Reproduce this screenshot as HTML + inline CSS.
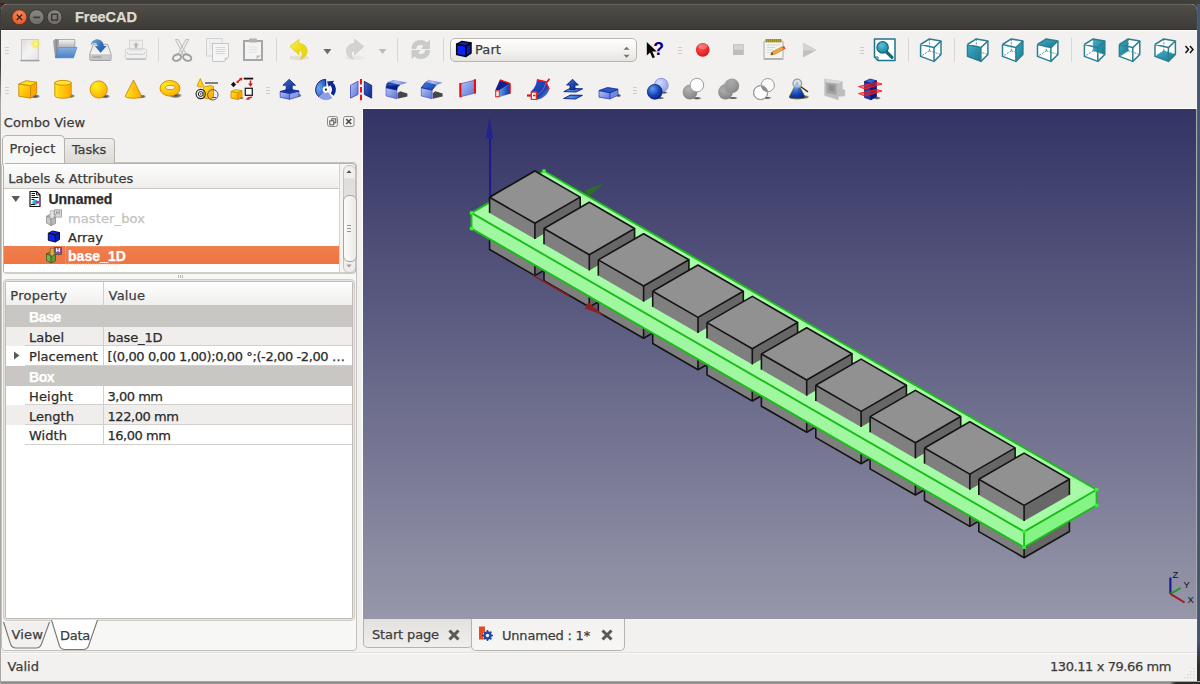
<!DOCTYPE html><html><head><meta charset="utf-8"><title>FreeCAD</title><style>
html,body{margin:0;padding:0;}
body{width:1200px;height:684px;overflow:hidden;background:#403f3a;position:relative;
 font-family:"DejaVu Sans","Liberation Sans",sans-serif;font-size:13px;color:#3c3c3c;}
.abs{position:absolute;}
.t{position:absolute;white-space:nowrap;line-height:1;-webkit-text-stroke:0.25px currentColor;}
#win{position:absolute;left:1px;top:4px;width:1196px;height:677px;background:#f2f1f0;overflow:hidden;border-radius:6px 6px 0 0;}
#title{position:absolute;left:0;top:0;width:1196px;height:26px;background:linear-gradient(#65645d,#65645d 1px,#4e4d47 1px,#45443f 50%,#3d3c38 25px,#33322e 25px);border-radius:5px 5px 0 0;}
#tl{position:absolute;left:0;top:26px;width:1196px;height:1px;background:#fbfbfa;}
</style></head><body>
<div class="abs" style="left:0;top:0;width:1200px;height:4px;background:#403f3a"></div><svg class="abs" style="left:0;top:3px" width="6" height="6" viewBox="0 0 6 6"><path d="M0 0h5.500L1 4.800H0z" fill="#7d0606"/></svg>
<div class="abs" style="left:1197px;top:4px;width:1px;height:680px;background:#5e5d5d"></div>
<div class="abs" style="left:1198px;top:4px;width:2px;height:680px;background:linear-gradient(90deg,#3f506b,#425c80)"></div>
<div class="abs" style="left:1197px;top:640px;width:3px;height:44px;background:linear-gradient(rgba(45,44,42,0),#2d2c2a 60%)"></div>
<div class="abs" style="left:0;top:681px;width:1200px;height:3px;background:linear-gradient(#aaa6a2,#aaa6a2 1px,#8b8989 1px,#8b8989 2px,#9b9997 2px)"></div>
<div class="abs" style="left:1170px;top:682px;width:30px;height:2px;background:linear-gradient(90deg,#8b8989,#2c2b29 20%)"></div>
<div class="abs" style="left:0;top:4px;width:1px;height:680px;background:linear-gradient(#3e3d39,#3e3d39 62px,#aaa6a1 98px,#aaa6a1)"></div>
<div id="win">
<div id="title"></div><div id="tl"></div>
</div>
<svg class="abs" style="left:0;top:4px" width="200" height="26" viewBox="0 0 200 26"><defs><radialGradient id="cb" cx="0.5" cy="0.3" r="0.8"><stop offset="0" stop-color="#f58a5e"/><stop offset="1" stop-color="#e2501c"/></radialGradient><linearGradient id="gb" x1="0" y1="0" x2="0" y2="1"><stop offset="0" stop-color="#8a8983"/><stop offset="1" stop-color="#6b6a65"/></linearGradient></defs><circle cx="19.4" cy="13.2" r="7.5" fill="url(#cb)" stroke="#5a2a18" stroke-width="0.8"/><path d="M16.7 10.5l5.400 5.400M22.100 10.500l-5.400 5.400" stroke="#4a2013" stroke-width="1.400"/><circle cx="36.600" cy="13.200" r="7.500" fill="url(#gb)" stroke="#2e2d2a" stroke-width="0.800"/><path d="M33.200 13.400h6.800" stroke="#3a3935" stroke-width="1.600"/><circle cx="54.600" cy="13.200" r="7.500" fill="url(#gb)" stroke="#2e2d2a" stroke-width="0.800"/><rect x="51.700" y="10.300" width="5.800" height="5.800" fill="none" stroke="#3a3935" stroke-width="1.400"/></svg>
<div class="abs" style="left:5px;top:47px;width:4px;height:1px;background:#cfccc7"></div><div class="abs" style="left:5px;top:50px;width:4px;height:1px;background:#cfccc7"></div><div class="abs" style="left:5px;top:53px;width:4px;height:1px;background:#cfccc7"></div>
<div class="abs" style="left:5px;top:87px;width:4px;height:1px;background:#cfccc7"></div><div class="abs" style="left:5px;top:90px;width:4px;height:1px;background:#cfccc7"></div><div class="abs" style="left:5px;top:93px;width:4px;height:1px;background:#cfccc7"></div>
<div class="abs" style="left:678px;top:47px;width:4px;height:1px;background:#cfccc7"></div><div class="abs" style="left:678px;top:50px;width:4px;height:1px;background:#cfccc7"></div><div class="abs" style="left:678px;top:53px;width:4px;height:1px;background:#cfccc7"></div>
<div class="abs" style="left:860px;top:47px;width:4px;height:1px;background:#cfccc7"></div><div class="abs" style="left:860px;top:50px;width:4px;height:1px;background:#cfccc7"></div><div class="abs" style="left:860px;top:53px;width:4px;height:1px;background:#cfccc7"></div>
<div class="abs" style="left:266px;top:87px;width:4px;height:1px;background:#cfccc7"></div><div class="abs" style="left:266px;top:90px;width:4px;height:1px;background:#cfccc7"></div><div class="abs" style="left:266px;top:93px;width:4px;height:1px;background:#cfccc7"></div>
<div class="abs" style="left:633px;top:87px;width:4px;height:1px;background:#cfccc7"></div><div class="abs" style="left:633px;top:90px;width:4px;height:1px;background:#cfccc7"></div><div class="abs" style="left:633px;top:93px;width:4px;height:1px;background:#cfccc7"></div>
<div class="abs" style="left:158px;top:38px;width:1px;height:24px;background:#dad7d2"></div>
<div class="abs" style="left:275.5px;top:38px;width:1px;height:24px;background:#dad7d2"></div>
<div class="abs" style="left:397px;top:38px;width:1px;height:24px;background:#dad7d2"></div>
<div class="abs" style="left:443px;top:38px;width:1px;height:24px;background:#dad7d2"></div>
<div class="abs" style="left:908px;top:38px;width:1px;height:24px;background:#dad7d2"></div>
<div class="abs" style="left:954px;top:38px;width:1px;height:24px;background:#dad7d2"></div>
<div class="abs" style="left:1071px;top:38px;width:1px;height:24px;background:#dad7d2"></div>
<div class="abs" style="left:450px;top:38px;width:184.5px;height:21.5px;border:1px solid #bab6b0;border-radius:5px;background:linear-gradient(#fefefe,#f3f2f0 55%,#e6e4e0)"></div>
<svg class="abs" style="left:620px;top:40px" width="12" height="20" viewBox="620 40 12 20"><path d="M623.500 49.700L626.600 46.700 629.700 49.700zM623.500 54.700L626.600 57.700 629.700 54.700z" fill="#77756f"/></svg>
<svg class="abs" style="left:1184px;top:44px" width="12" height="12" viewBox="0 0 12 12"><path d="M1.5 2l3 3.5-3 3.5M6 2l3 3.5-3 3.5" fill="none" stroke="#111" stroke-width="1.5"/></svg>
<svg class="abs" style="left:325px;top:114px" width="32" height="16" viewBox="0 0 32 16"><rect x="2.5" y="2.5" width="10" height="10" rx="2" fill="#f4f3f2" stroke="#8b8985"/><rect x="6.8" y="4.8" width="4" height="4" fill="none" stroke="#55534f" stroke-width="1"/><rect x="4.8" y="6.8" width="4" height="4" fill="#f4f3f2" stroke="#55534f" stroke-width="1"/><rect x="18.5" y="2.5" width="10.5" height="10" rx="2" fill="#f4f3f2" stroke="#8b8985"/><path d="M21.2 5l5 5M26.2 5l-5 5" stroke="#4a4945" stroke-width="1.7"/></svg>
<div class="abs" style="left:1px;top:162px;width:354px;height:487px;border:1px solid #c4c1bc;border-radius:4px;background:#f7f7f6"></div>
<div class="abs" style="left:63px;top:138px;width:50px;height:24px;border:1px solid #b6b3ad;border-bottom:none;border-radius:4px 4px 0 0;background:linear-gradient(#eeedeb,#dddad6)"></div>
<div class="abs" style="left:1.5px;top:135px;width:61.5px;height:29px;border:1px solid #b6b3ad;border-bottom:none;border-radius:5px 5px 0 0;background:linear-gradient(#f6f5f4,#f7f7f6)"></div>
<div class="abs" style="left:3px;top:163px;width:351px;height:108px;border:1px solid #b6b3ad;border-bottom:2px solid #cfccc8;border-radius:4px;background:#f4f3f2"></div>
<div class="abs" style="left:4px;top:164px;width:335px;height:108px;background:#fff;border-right:1px solid #d5d2cd"></div>
<div class="abs" style="left:4px;top:164px;width:335px;height:24px;background:linear-gradient(#fdfdfd,#efeeec);border-bottom:1px solid #c9c6c1"></div>
<div class="abs" style="left:4px;top:246px;width:335px;height:18px;background:linear-gradient(#f07f4e,#ee7440)"></div>
<div class="abs" style="left:342.5px;top:164.5px;width:11px;height:106px;background:linear-gradient(#efeeec,#efeeec 12px,#dfddd9 13px,#e3e1de 30px,#efeeec 31px);border-radius:6px;border:1px solid #c6c3bd"></div>
<div class="abs" style="left:342.5px;top:194.5px;width:12px;height:65px;background:linear-gradient(90deg,#fbfbfa,#eceae7);border-radius:6px;border:1px solid #a9a59e"></div>
<svg class="abs" style="left:342px;top:166px" width="14" height="106" viewBox="0 0 14 106"><path d="M4.5 7L7 4.2 9.5 7z" fill="#4b4a46"/><path d="M4.2 98.5L7 101.5 9.8 98.5z" fill="#a5a29c"/><path d="M5 59.5h4M5 62.5h4M5 65.5h4" stroke="#9a968f" stroke-width="1"/></svg>
<div class="abs" style="left:178px;top:275px;width:1px;height:3px;background:#bdbab4"></div>
<div class="abs" style="left:180px;top:275px;width:1px;height:3px;background:#bdbab4"></div>
<div class="abs" style="left:182px;top:275px;width:1px;height:3px;background:#bdbab4"></div>
<div class="abs" style="left:3px;top:279px;width:350px;height:340px;border:1px solid #cfccc8;border-radius:4px;background:#e6e4e1"></div>
<div class="abs" style="left:5px;top:281px;width:346px;height:336px;border:1px solid #bfbcb7;border-radius:2px;background:#fff"></div>
<div class="abs" style="left:6px;top:282px;width:346px;height:23px;background:linear-gradient(#fefefe,#f0efed);border-bottom:1px solid #c9c6c1"></div>
<div class="abs" style="left:6px;top:306px;width:346px;height:21px;background:#c9c7c4"></div>
<div class="abs" style="left:6px;top:327px;width:346px;height:19px;background:#efeeed"></div>
<div class="abs" style="left:25px;top:345px;width:327px;height:1px;background:#d2d0cc"></div>
<div class="abs" style="left:25px;top:365px;width:327px;height:1px;background:#d2d0cc"></div>
<div class="abs" style="left:6px;top:366px;width:346px;height:19.5px;background:#c9c7c4"></div>
<div class="abs" style="left:25px;top:404px;width:327px;height:1px;background:#d2d0cc"></div>
<div class="abs" style="left:6px;top:405px;width:346px;height:19.5px;background:#efeeed"></div>
<div class="abs" style="left:25px;top:423.5px;width:327px;height:1px;background:#d2d0cc"></div>
<div class="abs" style="left:25px;top:444px;width:327px;height:1px;background:#d2d0cc"></div>
<div class="abs" style="left:103px;top:282px;width:1px;height:24px;background:#d2d0cc"></div>
<div class="abs" style="left:103px;top:327px;width:1px;height:39px;background:#d2d0cc"></div>
<div class="abs" style="left:103px;top:385.5px;width:1px;height:58.5px;background:#d2d0cc"></div>
<svg class="abs" style="left:12px;top:350px" width="10" height="12" viewBox="0 0 10 12"><path d="M2 1.5L7.5 5.5 2 9.5z" fill="#5a5955"/></svg>
<svg class="abs" style="left:10px;top:193px" width="12" height="12" viewBox="0 0 12 12"><path d="M1.5 3h8.5L5.8 9z" fill="#5a5955"/></svg>
<svg class="abs" style="left:0;top:618px" width="120" height="36" viewBox="0 0 120 36"><path d="M3.500 4 L10.500 26 Q12 30 16 30 L36 30 Q40 30 41.500 26 L49.500 4" fill="#f1f0ee" stroke="#7b7873" stroke-width="1.100"/><path d="M51.500 2 L59.500 28 Q61 31.500 65 31.500 L83 31.500 Q87 31.500 88.500 28 L97.500 2" fill="#ffffff" stroke="#7b7873" stroke-width="1.100"/></svg>
<div class="abs" style="left:363px;top:619px;width:108px;height:28px;border:1px solid #b6b3ad;border-top:none;border-radius:0 0 5px 5px;background:linear-gradient(#e3e1dd,#f0efed)"></div>
<div class="abs" style="left:471px;top:619px;width:152px;height:31px;border:1px solid #b6b3ad;border-top:none;border-radius:0 0 5px 5px;background:linear-gradient(#f3f2f1,#f6f6f5)"></div>
<svg class="abs" style="left:447px;top:628px" width="14" height="14" viewBox="0 0 14 14"><path d="M2.5 2.5l9 9M11.5 2.5l-9 9" stroke="#5b5955" stroke-width="3.1"/></svg>
<svg class="abs" style="left:600px;top:628px" width="14" height="14" viewBox="0 0 14 14"><path d="M2.5 2.5l9 9M11.5 2.5l-9 9" stroke="#5b5955" stroke-width="3.1"/></svg>
<div class="abs" style="left:362px;top:108px;width:835px;height:1px;background:#fff"></div>
<div class="abs" style="left:362px;top:108px;width:1px;height:511px;background:#fff"></div>
<div class="abs" style="left:1196px;top:109px;width:1px;height:510px;background:#a9a7a5"></div>
<div class="abs" style="left:1px;top:652px;width:1196px;height:1px;background:#e1dfdb"></div>
<div class="abs" style="left:1px;top:653px;width:1196px;height:1px;background:#fafaf9"></div>
<svg class="abs" style="left:1180px;top:664px" width="16" height="16" viewBox="0 0 16 16" fill="#dbd9d5"><rect x="13" y="4" width="1.500" height="1.500"/><rect x="10" y="7" width="1.500" height="1.500"/><rect x="13" y="7" width="1.500" height="1.500"/><rect x="7" y="10" width="1.500" height="1.500"/><rect x="10" y="10" width="1.500" height="1.500"/><rect x="13" y="10" width="1.500" height="1.500"/><rect x="4" y="13" width="1.500" height="1.500"/><rect x="7" y="13" width="1.500" height="1.500"/><rect x="10" y="13" width="1.500" height="1.500"/><rect x="13" y="13" width="1.500" height="1.500"/></svg>
<svg class="abs" style="left:363px;top:109px" width="833" height="510" viewBox="0 0 833 510"><defs><linearGradient id="bg" x1="0" y1="0" x2="0" y2="1"><stop offset="0" stop-color="#333365"/><stop offset="1" stop-color="#9797aa"/></linearGradient></defs><rect width="833" height="510" fill="url(#bg)"/><line x1="127.1" y1="90.8" x2="127.1" y2="28.6" stroke="#1b1b8e" stroke-width="2"/><polygon points="126.6,8.2 122.8,29.6 130.4,29.6" fill="#23238f"/><line x1="126.6" y1="140.5" x2="223.5" y2="84.4" stroke="#1d7a1d" stroke-width="2"/><polygon points="241.2,74.2 221.7,81.3 225.3,87.5" fill="#2a6e2a"/><polygon points="126.6,140.5 171.9,166.6 171.9,114.3 126.6,88.2" fill="#7f7f7f"/><polygon points="171.9,166.6 217.2,140.4 217.2,88.1 171.9,114.3" fill="#676767"/><polygon points="126.6,88.2 171.9,114.3 217.2,88.1 171.9,62.0" fill="#919191"/><polyline points="126.6,88.2 171.9,114.3 217.2,88.1 171.9,62.0 126.6,88.2" fill="none" stroke="#141414" stroke-width="1.6" stroke-linejoin="round" stroke-linecap="butt"/><polyline points="126.6,88.2 126.6,140.5 171.9,166.6 217.2,140.4 217.2,88.1" fill="none" stroke="#141414" stroke-width="1.6" stroke-linejoin="round" stroke-linecap="butt"/><polyline points="171.9,114.3 171.9,166.6" fill="none" stroke="#141414" stroke-width="1.6" stroke-linejoin="round" stroke-linecap="butt"/><polygon points="181.0,171.8 226.3,198.0 226.3,145.7 181.0,119.5" fill="#7f7f7f"/><polygon points="226.3,198.0 271.6,171.8 271.6,119.5 226.3,145.7" fill="#676767"/><polygon points="181.0,119.5 226.3,145.7 271.6,119.5 226.3,93.3" fill="#919191"/><polyline points="181.0,119.5 226.3,145.7 271.6,119.5 226.3,93.3 181.0,119.5" fill="none" stroke="#141414" stroke-width="1.6" stroke-linejoin="round" stroke-linecap="butt"/><polyline points="181.0,119.5 181.0,171.8 226.3,198.0 271.6,171.8 271.6,119.5" fill="none" stroke="#141414" stroke-width="1.6" stroke-linejoin="round" stroke-linecap="butt"/><polyline points="226.3,145.7 226.3,198.0" fill="none" stroke="#141414" stroke-width="1.6" stroke-linejoin="round" stroke-linecap="butt"/><polygon points="235.3,203.2 280.6,229.3 280.6,177.0 235.3,150.9" fill="#7f7f7f"/><polygon points="280.6,229.3 325.9,203.1 325.9,150.8 280.6,177.0" fill="#676767"/><polygon points="235.3,150.9 280.6,177.0 325.9,150.8 280.6,124.7" fill="#919191"/><polyline points="235.3,150.9 280.6,177.0 325.9,150.8 280.6,124.7 235.3,150.9" fill="none" stroke="#141414" stroke-width="1.6" stroke-linejoin="round" stroke-linecap="butt"/><polyline points="235.3,150.9 235.3,203.2 280.6,229.3 325.9,203.1 325.9,150.8" fill="none" stroke="#141414" stroke-width="1.6" stroke-linejoin="round" stroke-linecap="butt"/><polyline points="280.6,177.0 280.6,229.3" fill="none" stroke="#141414" stroke-width="1.6" stroke-linejoin="round" stroke-linecap="butt"/><polygon points="289.7,234.5 335.0,260.7 335.0,208.4 289.7,182.2" fill="#7f7f7f"/><polygon points="335.0,260.7 380.3,234.5 380.3,182.2 335.0,208.4" fill="#676767"/><polygon points="289.7,182.2 335.0,208.4 380.3,182.2 335.0,156.0" fill="#919191"/><polyline points="289.7,182.2 335.0,208.4 380.3,182.2 335.0,156.0 289.7,182.2" fill="none" stroke="#141414" stroke-width="1.6" stroke-linejoin="round" stroke-linecap="butt"/><polyline points="289.7,182.2 289.7,234.5 335.0,260.7 380.3,234.5 380.3,182.2" fill="none" stroke="#141414" stroke-width="1.6" stroke-linejoin="round" stroke-linecap="butt"/><polyline points="335.0,208.4 335.0,260.7" fill="none" stroke="#141414" stroke-width="1.6" stroke-linejoin="round" stroke-linecap="butt"/><polygon points="344.0,265.9 389.3,292.0 389.3,239.7 344.0,213.6" fill="#7f7f7f"/><polygon points="389.3,292.0 434.6,265.8 434.6,213.5 389.3,239.7" fill="#676767"/><polygon points="344.0,213.6 389.3,239.7 434.6,213.5 389.3,187.4" fill="#919191"/><polyline points="344.0,213.6 389.3,239.7 434.6,213.5 389.3,187.4 344.0,213.6" fill="none" stroke="#141414" stroke-width="1.6" stroke-linejoin="round" stroke-linecap="butt"/><polyline points="344.0,213.6 344.0,265.9 389.3,292.0 434.6,265.8 434.6,213.5" fill="none" stroke="#141414" stroke-width="1.6" stroke-linejoin="round" stroke-linecap="butt"/><polyline points="389.3,239.7 389.3,292.0" fill="none" stroke="#141414" stroke-width="1.6" stroke-linejoin="round" stroke-linecap="butt"/><polygon points="398.4,297.2 443.7,323.3 443.7,271.0 398.4,244.9" fill="#7f7f7f"/><polygon points="443.7,323.3 489.0,297.1 489.0,244.8 443.7,271.0" fill="#676767"/><polygon points="398.4,244.9 443.7,271.0 489.0,244.8 443.7,218.7" fill="#919191"/><polyline points="398.4,244.9 443.7,271.0 489.0,244.8 443.7,218.7 398.4,244.9" fill="none" stroke="#141414" stroke-width="1.6" stroke-linejoin="round" stroke-linecap="butt"/><polyline points="398.4,244.9 398.4,297.2 443.7,323.3 489.0,297.1 489.0,244.8" fill="none" stroke="#141414" stroke-width="1.6" stroke-linejoin="round" stroke-linecap="butt"/><polyline points="443.7,271.0 443.7,323.3" fill="none" stroke="#141414" stroke-width="1.6" stroke-linejoin="round" stroke-linecap="butt"/><polygon points="452.8,328.6 498.1,354.7 498.1,302.4 452.8,276.3" fill="#7f7f7f"/><polygon points="498.1,354.7 543.4,328.5 543.4,276.2 498.1,302.4" fill="#676767"/><polygon points="452.8,276.3 498.1,302.4 543.4,276.2 498.1,250.1" fill="#919191"/><polyline points="452.8,276.3 498.1,302.4 543.4,276.2 498.1,250.1 452.8,276.3" fill="none" stroke="#141414" stroke-width="1.6" stroke-linejoin="round" stroke-linecap="butt"/><polyline points="452.8,276.3 452.8,328.6 498.1,354.7 543.4,328.5 543.4,276.2" fill="none" stroke="#141414" stroke-width="1.6" stroke-linejoin="round" stroke-linecap="butt"/><polyline points="498.1,302.4 498.1,354.7" fill="none" stroke="#141414" stroke-width="1.6" stroke-linejoin="round" stroke-linecap="butt"/><polygon points="507.1,359.9 552.4,386.0 552.4,333.7 507.1,307.6" fill="#7f7f7f"/><polygon points="552.4,386.0 597.7,359.8 597.7,307.5 552.4,333.7" fill="#676767"/><polygon points="507.1,307.6 552.4,333.7 597.7,307.5 552.4,281.4" fill="#919191"/><polyline points="507.1,307.6 552.4,333.7 597.7,307.5 552.4,281.4 507.1,307.6" fill="none" stroke="#141414" stroke-width="1.6" stroke-linejoin="round" stroke-linecap="butt"/><polyline points="507.1,307.6 507.1,359.9 552.4,386.0 597.7,359.8 597.7,307.5" fill="none" stroke="#141414" stroke-width="1.6" stroke-linejoin="round" stroke-linecap="butt"/><polyline points="552.4,333.7 552.4,386.0" fill="none" stroke="#141414" stroke-width="1.6" stroke-linejoin="round" stroke-linecap="butt"/><polygon points="561.5,391.3 606.8,417.4 606.8,365.1 561.5,339.0" fill="#7f7f7f"/><polygon points="606.8,417.4 652.1,391.2 652.1,338.9 606.8,365.1" fill="#676767"/><polygon points="561.5,339.0 606.8,365.1 652.1,338.9 606.8,312.8" fill="#919191"/><polyline points="561.5,339.0 606.8,365.1 652.1,338.9 606.8,312.8 561.5,339.0" fill="none" stroke="#141414" stroke-width="1.6" stroke-linejoin="round" stroke-linecap="butt"/><polyline points="561.5,339.0 561.5,391.3 606.8,417.4 652.1,391.2 652.1,338.9" fill="none" stroke="#141414" stroke-width="1.6" stroke-linejoin="round" stroke-linecap="butt"/><polyline points="606.8,365.1 606.8,417.4" fill="none" stroke="#141414" stroke-width="1.6" stroke-linejoin="round" stroke-linecap="butt"/><polygon points="615.8,422.6 661.1,448.7 661.1,396.4 615.8,370.3" fill="#7f7f7f"/><polygon points="661.1,448.7 706.4,422.5 706.4,370.2 661.1,396.4" fill="#676767"/><polygon points="615.8,370.3 661.1,396.4 706.4,370.2 661.1,344.1" fill="#919191"/><polyline points="615.8,370.3 661.1,396.4 706.4,370.2 661.1,344.1 615.8,370.3" fill="none" stroke="#141414" stroke-width="1.6" stroke-linejoin="round" stroke-linecap="butt"/><polyline points="615.8,370.3 615.8,422.6 661.1,448.7 706.4,422.5 706.4,370.2" fill="none" stroke="#141414" stroke-width="1.6" stroke-linejoin="round" stroke-linecap="butt"/><polyline points="661.1,396.4 661.1,448.7" fill="none" stroke="#141414" stroke-width="1.6" stroke-linejoin="round" stroke-linecap="butt"/><line x1="169.6" y1="166.1" x2="205.9" y2="187.0" stroke="#8c2020" stroke-width="1.6"/><polygon points="241.2,206.6 225.3,193.3 221.7,199.5" fill="#8e2222"/><polygon points="108.5,119.6 661.1,438.3 661.1,422.6 108.5,103.9" fill="#9ff79f"/><polygon points="661.1,438.3 733.6,396.3 733.6,380.7 661.1,422.6" fill="#84f584"/><polygon points="108.5,103.9 661.1,422.6 733.6,380.7 181.0,62.0" fill="#a6fba6"/><polyline points="108.5,103.9 661.1,422.6 733.6,380.7 181.0,62.0 108.5,103.9" fill="none" stroke="#1cbc1c" stroke-width="1.9" stroke-linejoin="round" stroke-linecap="butt"/><polyline points="108.5,103.9 108.5,119.6 661.1,438.3 733.6,396.3 733.6,380.7" fill="none" stroke="#1cbc1c" stroke-width="1.9" stroke-linejoin="round" stroke-linecap="butt"/><polyline points="661.1,422.6 661.1,438.3" fill="none" stroke="#1cbc1c" stroke-width="1.9" stroke-linejoin="round" stroke-linecap="butt"/><rect x="106.8" y="102.2" width="3.4" height="3.4" fill="#37f037"/><rect x="106.8" y="117.9" width="3.4" height="3.4" fill="#37f037"/><rect x="659.4" y="420.9" width="3.4" height="3.4" fill="#37f037"/><rect x="659.4" y="436.6" width="3.4" height="3.4" fill="#37f037"/><rect x="731.9" y="379.0" width="3.4" height="3.4" fill="#37f037"/><rect x="731.9" y="394.6" width="3.4" height="3.4" fill="#37f037"/><rect x="179.3" y="60.3" width="3.4" height="3.4" fill="#37f037"/><polygon points="126.6,103.9 171.9,130.0 171.9,114.3 126.6,88.2" fill="#7f7f7f"/><polygon points="171.9,130.0 217.2,103.8 217.2,88.1 171.9,114.3" fill="#676767"/><polygon points="126.6,88.2 171.9,114.3 217.2,88.1 171.9,62.0" fill="#919191"/><polyline points="126.6,88.2 171.9,114.3 217.2,88.1 171.9,62.0 126.6,88.2" fill="none" stroke="#141414" stroke-width="1.6" stroke-linejoin="round" stroke-linecap="butt"/><polyline points="126.6,88.2 126.6,103.9" fill="none" stroke="#141414" stroke-width="1.6" stroke-linejoin="round" stroke-linecap="butt"/><polyline points="171.9,114.3 171.9,130.0" fill="none" stroke="#141414" stroke-width="1.6" stroke-linejoin="round" stroke-linecap="butt"/><polyline points="217.2,88.1 217.2,103.8" fill="none" stroke="#141414" stroke-width="1.6" stroke-linejoin="round" stroke-linecap="butt"/><polygon points="181.0,135.2 226.3,161.4 226.3,145.7 181.0,119.5" fill="#7f7f7f"/><polygon points="226.3,161.4 271.6,135.2 271.6,119.5 226.3,145.7" fill="#676767"/><polygon points="181.0,119.5 226.3,145.7 271.6,119.5 226.3,93.3" fill="#919191"/><polyline points="181.0,119.5 226.3,145.7 271.6,119.5 226.3,93.3 181.0,119.5" fill="none" stroke="#141414" stroke-width="1.6" stroke-linejoin="round" stroke-linecap="butt"/><polyline points="181.0,119.5 181.0,135.2" fill="none" stroke="#141414" stroke-width="1.6" stroke-linejoin="round" stroke-linecap="butt"/><polyline points="226.3,145.7 226.3,161.4" fill="none" stroke="#141414" stroke-width="1.6" stroke-linejoin="round" stroke-linecap="butt"/><polyline points="271.6,119.5 271.6,135.2" fill="none" stroke="#141414" stroke-width="1.6" stroke-linejoin="round" stroke-linecap="butt"/><polygon points="235.3,166.6 280.6,192.7 280.6,177.0 235.3,150.9" fill="#7f7f7f"/><polygon points="280.6,192.7 325.9,166.5 325.9,150.8 280.6,177.0" fill="#676767"/><polygon points="235.3,150.9 280.6,177.0 325.9,150.8 280.6,124.7" fill="#919191"/><polyline points="235.3,150.9 280.6,177.0 325.9,150.8 280.6,124.7 235.3,150.9" fill="none" stroke="#141414" stroke-width="1.6" stroke-linejoin="round" stroke-linecap="butt"/><polyline points="235.3,150.9 235.3,166.6" fill="none" stroke="#141414" stroke-width="1.6" stroke-linejoin="round" stroke-linecap="butt"/><polyline points="280.6,177.0 280.6,192.7" fill="none" stroke="#141414" stroke-width="1.6" stroke-linejoin="round" stroke-linecap="butt"/><polyline points="325.9,150.8 325.9,166.5" fill="none" stroke="#141414" stroke-width="1.6" stroke-linejoin="round" stroke-linecap="butt"/><polygon points="289.7,197.9 335.0,224.0 335.0,208.4 289.7,182.2" fill="#7f7f7f"/><polygon points="335.0,224.0 380.3,197.8 380.3,182.2 335.0,208.4" fill="#676767"/><polygon points="289.7,182.2 335.0,208.4 380.3,182.2 335.0,156.0" fill="#919191"/><polyline points="289.7,182.2 335.0,208.4 380.3,182.2 335.0,156.0 289.7,182.2" fill="none" stroke="#141414" stroke-width="1.6" stroke-linejoin="round" stroke-linecap="butt"/><polyline points="289.7,182.2 289.7,197.9" fill="none" stroke="#141414" stroke-width="1.6" stroke-linejoin="round" stroke-linecap="butt"/><polyline points="335.0,208.4 335.0,224.0" fill="none" stroke="#141414" stroke-width="1.6" stroke-linejoin="round" stroke-linecap="butt"/><polyline points="380.3,182.2 380.3,197.8" fill="none" stroke="#141414" stroke-width="1.6" stroke-linejoin="round" stroke-linecap="butt"/><polygon points="344.0,229.3 389.3,255.4 389.3,239.7 344.0,213.6" fill="#7f7f7f"/><polygon points="389.3,255.4 434.6,229.2 434.6,213.5 389.3,239.7" fill="#676767"/><polygon points="344.0,213.6 389.3,239.7 434.6,213.5 389.3,187.4" fill="#919191"/><polyline points="344.0,213.6 389.3,239.7 434.6,213.5 389.3,187.4 344.0,213.6" fill="none" stroke="#141414" stroke-width="1.6" stroke-linejoin="round" stroke-linecap="butt"/><polyline points="344.0,213.6 344.0,229.3" fill="none" stroke="#141414" stroke-width="1.6" stroke-linejoin="round" stroke-linecap="butt"/><polyline points="389.3,239.7 389.3,255.4" fill="none" stroke="#141414" stroke-width="1.6" stroke-linejoin="round" stroke-linecap="butt"/><polyline points="434.6,213.5 434.6,229.2" fill="none" stroke="#141414" stroke-width="1.6" stroke-linejoin="round" stroke-linecap="butt"/><polygon points="398.4,260.6 443.7,286.7 443.7,271.0 398.4,244.9" fill="#7f7f7f"/><polygon points="443.7,286.7 489.0,260.5 489.0,244.8 443.7,271.0" fill="#676767"/><polygon points="398.4,244.9 443.7,271.0 489.0,244.8 443.7,218.7" fill="#919191"/><polyline points="398.4,244.9 443.7,271.0 489.0,244.8 443.7,218.7 398.4,244.9" fill="none" stroke="#141414" stroke-width="1.6" stroke-linejoin="round" stroke-linecap="butt"/><polyline points="398.4,244.9 398.4,260.6" fill="none" stroke="#141414" stroke-width="1.6" stroke-linejoin="round" stroke-linecap="butt"/><polyline points="443.7,271.0 443.7,286.7" fill="none" stroke="#141414" stroke-width="1.6" stroke-linejoin="round" stroke-linecap="butt"/><polyline points="489.0,244.8 489.0,260.5" fill="none" stroke="#141414" stroke-width="1.6" stroke-linejoin="round" stroke-linecap="butt"/><polygon points="452.8,292.0 498.1,318.1 498.1,302.4 452.8,276.3" fill="#7f7f7f"/><polygon points="498.1,318.1 543.4,291.9 543.4,276.2 498.1,302.4" fill="#676767"/><polygon points="452.8,276.3 498.1,302.4 543.4,276.2 498.1,250.1" fill="#919191"/><polyline points="452.8,276.3 498.1,302.4 543.4,276.2 498.1,250.1 452.8,276.3" fill="none" stroke="#141414" stroke-width="1.6" stroke-linejoin="round" stroke-linecap="butt"/><polyline points="452.8,276.3 452.8,292.0" fill="none" stroke="#141414" stroke-width="1.6" stroke-linejoin="round" stroke-linecap="butt"/><polyline points="498.1,302.4 498.1,318.1" fill="none" stroke="#141414" stroke-width="1.6" stroke-linejoin="round" stroke-linecap="butt"/><polyline points="543.4,276.2 543.4,291.9" fill="none" stroke="#141414" stroke-width="1.6" stroke-linejoin="round" stroke-linecap="butt"/><polygon points="507.1,323.3 552.4,349.4 552.4,333.7 507.1,307.6" fill="#7f7f7f"/><polygon points="552.4,349.4 597.7,323.2 597.7,307.5 552.4,333.7" fill="#676767"/><polygon points="507.1,307.6 552.4,333.7 597.7,307.5 552.4,281.4" fill="#919191"/><polyline points="507.1,307.6 552.4,333.7 597.7,307.5 552.4,281.4 507.1,307.6" fill="none" stroke="#141414" stroke-width="1.6" stroke-linejoin="round" stroke-linecap="butt"/><polyline points="507.1,307.6 507.1,323.3" fill="none" stroke="#141414" stroke-width="1.6" stroke-linejoin="round" stroke-linecap="butt"/><polyline points="552.4,333.7 552.4,349.4" fill="none" stroke="#141414" stroke-width="1.6" stroke-linejoin="round" stroke-linecap="butt"/><polyline points="597.7,307.5 597.7,323.2" fill="none" stroke="#141414" stroke-width="1.6" stroke-linejoin="round" stroke-linecap="butt"/><polygon points="561.5,354.6 606.8,380.8 606.8,365.1 561.5,339.0" fill="#7f7f7f"/><polygon points="606.8,380.8 652.1,354.6 652.1,338.9 606.8,365.1" fill="#676767"/><polygon points="561.5,339.0 606.8,365.1 652.1,338.9 606.8,312.8" fill="#919191"/><polyline points="561.5,339.0 606.8,365.1 652.1,338.9 606.8,312.8 561.5,339.0" fill="none" stroke="#141414" stroke-width="1.6" stroke-linejoin="round" stroke-linecap="butt"/><polyline points="561.5,339.0 561.5,354.6" fill="none" stroke="#141414" stroke-width="1.6" stroke-linejoin="round" stroke-linecap="butt"/><polyline points="606.8,365.1 606.8,380.8" fill="none" stroke="#141414" stroke-width="1.6" stroke-linejoin="round" stroke-linecap="butt"/><polyline points="652.1,338.9 652.1,354.6" fill="none" stroke="#141414" stroke-width="1.6" stroke-linejoin="round" stroke-linecap="butt"/><polygon points="615.8,386.0 661.1,412.1 661.1,396.4 615.8,370.3" fill="#7f7f7f"/><polygon points="661.1,412.1 706.4,385.9 706.4,370.2 661.1,396.4" fill="#676767"/><polygon points="615.8,370.3 661.1,396.4 706.4,370.2 661.1,344.1" fill="#919191"/><polyline points="615.8,370.3 661.1,396.4 706.4,370.2 661.1,344.1 615.8,370.3" fill="none" stroke="#141414" stroke-width="1.6" stroke-linejoin="round" stroke-linecap="butt"/><polyline points="615.8,370.3 615.8,386.0" fill="none" stroke="#141414" stroke-width="1.6" stroke-linejoin="round" stroke-linecap="butt"/><polyline points="661.1,396.4 661.1,412.1" fill="none" stroke="#141414" stroke-width="1.6" stroke-linejoin="round" stroke-linecap="butt"/><polyline points="706.4,370.2 706.4,385.9" fill="none" stroke="#141414" stroke-width="1.6" stroke-linejoin="round" stroke-linecap="butt"/><line x1="807.4" y1="484.8" x2="807.4" y2="468.5" stroke="#1b1b9a" stroke-width="2.2"/><line x1="807.4" y1="484.8" x2="817.7" y2="479.0" stroke="#1f9a1f" stroke-width="2"/><line x1="807.4" y1="484.8" x2="821.6" y2="493.5" stroke="#a01c1c" stroke-width="2"/><text x="809.6" y="468.6" font-family="Liberation Sans, sans-serif" font-size="9.5" fill="#111">Z</text><text x="820.6" y="479.2" font-family="Liberation Sans, sans-serif" font-size="9.5" fill="#111">Y</text><text x="824.6" y="494.2" font-family="Liberation Sans, sans-serif" font-size="9.5" fill="#111">X</text></svg>
<svg class="abs" style="left:0;top:30px" width="1200" height="40" viewBox="0 30 1200 40"><defs>
<linearGradient id="teal" x1="0" y1="0" x2="1" y2="1"><stop offset="0" stop-color="#3fb0cc"/><stop offset="1" stop-color="#17778d"/></linearGradient>
<linearGradient id="pg" x1="0" y1="0" x2="1" y2="1"><stop offset="0" stop-color="#dcdcdc"/><stop offset="0.5" stop-color="#f4f4f4"/><stop offset="1" stop-color="#e4e4e4"/></linearGradient>
<radialGradient id="glow"><stop offset="0" stop-color="#ffffd0"/><stop offset="0.35" stop-color="#f6ee55"/><stop offset="1" stop-color="#f0e63c" stop-opacity="0"/></radialGradient>
<linearGradient id="fb" x1="0" y1="0" x2="1" y2="0"><stop offset="0" stop-color="#b5b5b5"/><stop offset="0.5" stop-color="#8c8c8c"/><stop offset="1" stop-color="#c8c8c8"/></linearGradient>
<linearGradient id="fp" x1="0" y1="0" x2="0" y2="1"><stop offset="0" stop-color="#f6f6f6"/><stop offset="0.6" stop-color="#c4c4c4"/><stop offset="1" stop-color="#d8d8d8"/></linearGradient>
<linearGradient id="sva" x1="0" y1="0" x2="1" y2="1"><stop offset="0" stop-color="#7aa8dc"/><stop offset="0.6" stop-color="#2f68b4"/><stop offset="1" stop-color="#2c62ac"/></linearGradient>
<linearGradient id="fold" x1="0" y1="0" x2="0" y2="1"><stop offset="0" stop-color="#88b0e0"/><stop offset="1" stop-color="#4a80c6"/></linearGradient>
<linearGradient id="drv" x1="0" y1="0" x2="0" y2="1"><stop offset="0" stop-color="#e6e6e6"/><stop offset="0.6" stop-color="#f6f6f6"/><stop offset="1" stop-color="#d0d0d0"/></linearGradient>
<linearGradient id="und" x1="0" y1="0" x2="1" y2="1"><stop offset="0" stop-color="#f8f27a"/><stop offset="0.5" stop-color="#eedc14"/><stop offset="1" stop-color="#e9d015"/></linearGradient>
<radialGradient id="red" cx="0.4" cy="0.35" r="0.7"><stop offset="0" stop-color="#f55"/><stop offset="1" stop-color="#d81313"/></radialGradient>
<radialGradient id="mag" cx="0.4" cy="0.3" r="0.8"><stop offset="0" stop-color="#5cc3dc"/><stop offset="1" stop-color="#157a92"/></radialGradient>
</defs><rect x="21.5" y="39.500" width="16.800" height="20.800" fill="url(#pg)" stroke="#c9c9c9" stroke-width="1"/><path d="M20.300 60.600h19.200" stroke="#a0a0a0" stroke-width="1.500"/><circle cx="35.6" cy="43.9" r="5.6" fill="url(#glow)"/><path d="M53.500 41l1.500-1.500h3.500l1 18h-4z" fill="url(#fb)" stroke="#8a8a8a" stroke-width="0.700"/><path d="M58.500 39.500h16.300v10h-17z" fill="url(#fp)" stroke="#909090" stroke-width="0.700"/><path d="M58.600 47.300h18.300l-3.400 10.500h-18z" fill="url(#fold)" stroke="#4a7cc0" stroke-width="0.700"/><path d="M93.300 44.300h14.300l3.500 9.800v5.400q0 1-1 1h-19.300q-1 0-1-1v-5.400z" fill="url(#drv)" stroke="#9c9c9c" stroke-width="0.900" stroke-linejoin="round"/><path d="M90.200 54.300h20.500v5.200q0 .6-.6 .6h-19.300q-.6 0-.6-.6z" fill="#c4c4c4"/><path d="M92.500 57h9" stroke="#a8a8a8" stroke-width="1.600"/><path d="M103 55.500v3.500M105 55.500v3.500M107 55.500v3.500" stroke="#d4d4d4" stroke-width="0.800"/><path d="M90.700 45.600C91 41.200 95 38.700 98.600 39.500C102.200 40.400 103.600 43 103.800 46L106.600 46L100.600 52.800L94.700 46L97.500 46C97.500 44 96.500 43 95 43C93 43 91.500 44 90.700 45.600Z" fill="url(#sva)"/><rect x="129.500" y="40.200" width="13" height="9.500" fill="#ededed" stroke="#d2d2d2" stroke-width="0.800"/><path d="M136 42.300l3 3.300h-1.800v3.200h-2.400v-3.200h-1.800z" fill="#b9b9b9"/><rect x="125.300" y="48.800" width="21.300" height="10.600" rx="2.200" fill="#f0f0f0" stroke="#c9c9c9" stroke-width="0.800"/><path d="M127.500 52.200v1.300q0 .8 .8 .8h15.400q.8 0 .8-.8v-1.300" fill="none" stroke="#c4c4c4" stroke-width="0.900"/><path d="M126.500 59h19" stroke="#b9b9b9" stroke-width="1.300"/><rect x="129.500" y="48.800" width="13" height="1.700" fill="#d9d9d9"/><path d="M175.300 39.500l3 0 7.500 14-2 2.500zM188.800 39.500l-3 0-7.500 14 2 2.500z" fill="#e9e9e9" stroke="#b4b4b4" stroke-width="0.800"/><ellipse cx="177" cy="57.600" rx="4.300" ry="3" fill="none" stroke="#9d9d9d" stroke-width="1.900" transform="rotate(-25 177 57.600)"/><ellipse cx="187.200" cy="57.600" rx="4.300" ry="3" fill="none" stroke="#9d9d9d" stroke-width="1.900" transform="rotate(25 187.200 57.600)"/><rect x="206.500" y="38.500" width="15.500" height="17.500" fill="#f1f1f1" stroke="#d2d2d2"/><path d="M209 43h6M209 45.500h6M209 48h6" stroke="#dcdcdc" stroke-width="0.800"/><path d="M212.500 43.500h16v14l-4 4h-12z" fill="#f5f5f5" stroke="#c6c6c6"/><path d="M215.500 47.500h10M215.500 49.500h10M215.500 51.500h10M215.500 53.500h10" stroke="#d6d6d6" stroke-width="1"/><path d="M224.500 61.500v-4h4z" fill="#cfcfcf"/><rect x="244" y="41" width="18" height="19" fill="#f3f3f3" stroke="#a6a6a6" stroke-width="2"/><rect x="249" y="38.500" width="8" height="4" rx="1" fill="#b1b1b1"/><path d="M249 47h8M249 49.500h8M249 52h8" stroke="#e2e2e2" stroke-width="1"/><path d="M256.500 59v-3.500h4.500z" fill="#bbb"/><ellipse cx="299" cy="57.800" rx="10" ry="2.400" fill="#d5d3cf" opacity="0.600"/><path d="M289.900 46.500L299 39.300L299 43.600C304 43.600 307.300 47 307.100 51.500C306.900 55 304 58 300.100 59.100C303 56.500 303.500 51 299 50.300L299 54.700Z" fill="url(#und)" stroke="#d9c414" stroke-width="0.700" stroke-linejoin="round"/><path d="M323.400 48.900h8l-4 5.300z" fill="#6b6a66"/><ellipse cx="354.600" cy="57.800" rx="10" ry="2.200" fill="#e2e0dd" opacity="0.600"/><path d="M363.7 46.5 L354.6 39.3 L354.6 43.6 C349.6 43.6 346.3 47.0 346.5 51.5 C346.7 55.0 349.6 58.0 353.5 59.1 C350.6 56.5 350.1 51.0 354.6 50.3 L354.6 54.7 Z" fill="#d3d3d3" stroke="#c6c6c6" stroke-width="0.700" stroke-linejoin="round"/><path d="M378.800 48.900h7.600l-3.800 5.100z" fill="#bcbab6"/><path d="M412 48.500c0-5 3.500-8 8.500-8 3 0 5 1 6.500 2.500l2.500-2.500v8h-8l2.500-2.500c-1-1-2-1.500-3.500-1.500-2.500 0-4.500 1.500-4.500 4z" fill="#cbcbcb" stroke="#bcbcbc" stroke-width="0.600"/><path d="M429.500 50.500c0 5-3.500 8-8.500 8-3 0-5-1-6.500-2.500l-2.500 2.500v-8h8l-2.500 2.500c1 1 2 1.500 3.500 1.500 2.500 0 4.500-1.500 4.500-4z" fill="#cbcbcb" stroke="#bcbcbc" stroke-width="0.600"/><path d="M456.700 44.200l9.300 1.600v10.600l-9.300-2z" fill="#0a22f2" stroke="#080808" stroke-width="1.500" stroke-linejoin="round"/><path d="M466 45.800l5-2.800v10.200l-5 3.200z" fill="#061ac4" stroke="#080808" stroke-width="1.500" stroke-linejoin="round"/><path d="M456.700 44.200l5.300-2.800 9 1.600-5 2.800z" fill="#0a22f2" stroke="#080808" stroke-width="1.500" stroke-linejoin="round"/><path d="M646.800 42v13.500l3.200-3 2.600 5.700 2.300-1-2.600-5.600h4.500z" fill="#0a0a0a"/><text x="653.300" y="55.300" font-family="Liberation Sans, sans-serif" font-weight="bold" font-size="17.500" fill="#00008b">?</text><circle cx="702.700" cy="49.800" r="6.900" fill="url(#red)"/><ellipse cx="702.700" cy="46.300" rx="4.500" ry="2.600" fill="#fff" opacity="0.250"/><rect x="733" y="44.200" width="10.800" height="10.800" fill="#bcbcbc"/><rect x="733.800" y="45" width="9.200" height="4.800" fill="#d4d4d4"/><rect x="764" y="41" width="19" height="17.500" rx="1" fill="#f3f3f2" stroke="#aaa" stroke-width="1"/><path d="M763.500 59.300h20" stroke="#b4b4b4" stroke-width="1.400"/><rect x="765.500" y="39" width="16" height="3.300" fill="#b5a333"/><path d="M766.500 39v3.300M768.500 39v3.300M770.500 39v3.300M772.500 39v3.300M774.500 39v3.300M776.500 39v3.300M778.500 39v3.300M780.500 39v3.300" stroke="#8b7b16" stroke-width="0.700"/><path d="M767 45h13M767 47.500h8M767 50h6M767 52.500h5" stroke="#d1d1d1" stroke-width="0.900"/><path d="M770.800 54.800l1.200-2.800 10.500-5.300 1.600 2.500-10.300 5.400z" fill="#f2a93a" stroke="#b97514" stroke-width="0.700"/><path d="M782.500 46.700l1.500-.8 1.600 2.500-1.500.8z" fill="#e2352f"/><path d="M770.800 54.800l1.200-2.800 1.300 2.300z" fill="#4b3a20"/><path d="M803.300 43v14l12.800-7z" fill="#d3d3d3" stroke="#c8c8c8" stroke-width="0.600"/><path d="M803.300 50.500v6.500l12-6.500z" fill="#bfbfbf"/><path d="M874.500 39h20.500v21.500h-17l-3.500-3.500z" fill="#fff" stroke="#1e7589" stroke-width="1.500" stroke-linejoin="round"/><path d="M874.500 57h3.500v3.500" fill="none" stroke="#1e7589" stroke-width="1"/><path d="M886.500 52l5.500 5.300" stroke="#15697d" stroke-width="3.200" stroke-linecap="round"/><circle cx="882.600" cy="47.400" r="5.700" fill="url(#mag)" stroke="#14697e" stroke-width="1.200"/><polygon points="920.6,44.5 929.4,38.9 941.0,41.0 941.0,54.5 934.0,61.4 920.6,56.4" fill="#fff"/><line x1="929.4" y1="50.8" x2="920.6" y2="56.4" stroke="#3a8797" stroke-width="0.9" stroke-dasharray="2 1.2"/><line x1="929.4" y1="50.8" x2="941.0" y2="54.5" stroke="#3a8797" stroke-width="0.9" stroke-dasharray="2 1.2"/><line x1="929.4" y1="50.8" x2="929.4" y2="38.9" stroke="#3a8797" stroke-width="0.9" stroke-dasharray="2 1.2"/><polyline points="920.6,44.5 934.0,47.6 941.0,41.0 929.4,38.9 920.6,44.5" fill="none" stroke="#2b7f90" stroke-width="1.5" stroke-linejoin="round"/><polyline points="920.6,44.5 920.6,56.4 934.0,61.4 941.0,54.5 941.0,41.0" fill="none" stroke="#2b7f90" stroke-width="1.5" stroke-linejoin="round"/><polyline points="934.0,47.6 934.0,61.4" fill="none" stroke="#2b7f90" stroke-width="1.5" stroke-linejoin="round"/><polygon points="967.5,44.5 976.3,38.9 987.9,41.0 987.9,54.5 980.9,61.4 967.5,56.4" fill="#fff"/><polygon points="967.5,44.5 980.9,47.6 980.9,61.4 967.5,56.4" fill="url(#teal)"/><line x1="976.3" y1="50.8" x2="967.5" y2="56.4" stroke="#3a8797" stroke-width="0.9" stroke-dasharray="2 1.2"/><line x1="976.3" y1="50.8" x2="987.9" y2="54.5" stroke="#3a8797" stroke-width="0.9" stroke-dasharray="2 1.2"/><line x1="976.3" y1="50.8" x2="976.3" y2="38.9" stroke="#3a8797" stroke-width="0.9" stroke-dasharray="2 1.2"/><polyline points="967.5,44.5 980.9,47.6 987.9,41.0 976.3,38.9 967.5,44.5" fill="none" stroke="#2b7f90" stroke-width="1.5" stroke-linejoin="round"/><polyline points="967.5,44.5 967.5,56.4 980.9,61.4 987.9,54.5 987.9,41.0" fill="none" stroke="#2b7f90" stroke-width="1.5" stroke-linejoin="round"/><polyline points="980.9,47.6 980.9,61.4" fill="none" stroke="#2b7f90" stroke-width="1.5" stroke-linejoin="round"/><polygon points="1002.5,44.5 1011.3,38.9 1022.9,41.0 1022.9,54.5 1015.9,61.4 1002.5,56.4" fill="#fff"/><polygon points="1015.9,47.6 1022.9,41.0 1022.9,54.5 1015.9,61.4" fill="url(#teal)"/><line x1="1011.3" y1="50.8" x2="1002.5" y2="56.4" stroke="#3a8797" stroke-width="0.9" stroke-dasharray="2 1.2"/><line x1="1011.3" y1="50.8" x2="1022.9" y2="54.5" stroke="#3a8797" stroke-width="0.9" stroke-dasharray="2 1.2"/><line x1="1011.3" y1="50.8" x2="1011.3" y2="38.9" stroke="#3a8797" stroke-width="0.9" stroke-dasharray="2 1.2"/><polyline points="1002.5,44.5 1015.9,47.6 1022.9,41.0 1011.3,38.9 1002.5,44.5" fill="none" stroke="#2b7f90" stroke-width="1.5" stroke-linejoin="round"/><polyline points="1002.5,44.5 1002.5,56.4 1015.9,61.4 1022.9,54.5 1022.9,41.0" fill="none" stroke="#2b7f90" stroke-width="1.5" stroke-linejoin="round"/><polyline points="1015.9,47.6 1015.9,61.4" fill="none" stroke="#2b7f90" stroke-width="1.5" stroke-linejoin="round"/><polygon points="1037.5,44.5 1046.3,38.9 1057.9,41.0 1057.9,54.5 1050.9,61.4 1037.5,56.4" fill="#fff"/><polygon points="1037.5,44.5 1050.9,47.6 1057.9,41.0 1046.3,38.9" fill="url(#teal)"/><line x1="1046.3" y1="50.8" x2="1037.5" y2="56.4" stroke="#3a8797" stroke-width="0.9" stroke-dasharray="2 1.2"/><line x1="1046.3" y1="50.8" x2="1057.9" y2="54.5" stroke="#3a8797" stroke-width="0.9" stroke-dasharray="2 1.2"/><line x1="1046.3" y1="50.8" x2="1046.3" y2="38.9" stroke="#3a8797" stroke-width="0.9" stroke-dasharray="2 1.2"/><polyline points="1037.5,44.5 1050.9,47.6 1057.9,41.0 1046.3,38.9 1037.5,44.5" fill="none" stroke="#2b7f90" stroke-width="1.5" stroke-linejoin="round"/><polyline points="1037.5,44.5 1037.5,56.4 1050.9,61.4 1057.9,54.5 1057.9,41.0" fill="none" stroke="#2b7f90" stroke-width="1.5" stroke-linejoin="round"/><polyline points="1050.9,47.6 1050.9,61.4" fill="none" stroke="#2b7f90" stroke-width="1.5" stroke-linejoin="round"/><polygon points="1084.4,44.5 1093.2,38.9 1104.8,41.0 1104.8,54.5 1097.8,61.4 1084.4,56.4" fill="#fff"/><polygon points="1093.2,38.9 1104.8,41.0 1104.8,54.5 1093.2,50.8" fill="url(#teal)"/><line x1="1093.2" y1="50.8" x2="1084.4" y2="56.4" stroke="#3a8797" stroke-width="0.9" stroke-dasharray="2 1.2"/><line x1="1093.2" y1="50.8" x2="1104.8" y2="54.5" stroke="#3a8797" stroke-width="0.9" stroke-dasharray="2 1.2"/><line x1="1093.2" y1="50.8" x2="1093.2" y2="38.9" stroke="#3a8797" stroke-width="0.9" stroke-dasharray="2 1.2"/><polyline points="1084.4,44.5 1097.8,47.6 1104.8,41.0 1093.2,38.9 1084.4,44.5" fill="none" stroke="#2b7f90" stroke-width="1.5" stroke-linejoin="round"/><polyline points="1084.4,44.5 1084.4,56.4 1097.8,61.4 1104.8,54.5 1104.8,41.0" fill="none" stroke="#2b7f90" stroke-width="1.5" stroke-linejoin="round"/><polyline points="1097.8,47.6 1097.8,61.4" fill="none" stroke="#2b7f90" stroke-width="1.5" stroke-linejoin="round"/><polygon points="1119.4,44.5 1128.2,38.9 1139.8,41.0 1139.8,54.5 1132.8,61.4 1119.4,56.4" fill="#fff"/><polygon points="1119.4,44.5 1128.2,38.9 1128.2,50.8 1119.4,56.4" fill="url(#teal)"/><line x1="1128.2" y1="50.8" x2="1119.4" y2="56.4" stroke="#3a8797" stroke-width="0.9" stroke-dasharray="2 1.2"/><line x1="1128.2" y1="50.8" x2="1139.8" y2="54.5" stroke="#3a8797" stroke-width="0.9" stroke-dasharray="2 1.2"/><line x1="1128.2" y1="50.8" x2="1128.2" y2="38.9" stroke="#3a8797" stroke-width="0.9" stroke-dasharray="2 1.2"/><polyline points="1119.4,44.5 1132.8,47.6 1139.8,41.0 1128.2,38.9 1119.4,44.5" fill="none" stroke="#2b7f90" stroke-width="1.5" stroke-linejoin="round"/><polyline points="1119.4,44.5 1119.4,56.4 1132.8,61.4 1139.8,54.5 1139.8,41.0" fill="none" stroke="#2b7f90" stroke-width="1.5" stroke-linejoin="round"/><polyline points="1132.8,47.6 1132.8,61.4" fill="none" stroke="#2b7f90" stroke-width="1.5" stroke-linejoin="round"/><polygon points="1155.0,44.5 1163.8,38.9 1175.4,41.0 1175.4,54.5 1168.4,61.4 1155.0,56.4" fill="#fff"/><polygon points="1155.0,56.4 1168.4,61.4 1175.4,54.5 1163.8,50.8" fill="url(#teal)"/><line x1="1163.8" y1="50.8" x2="1155.0" y2="56.4" stroke="#3a8797" stroke-width="0.9" stroke-dasharray="2 1.2"/><line x1="1163.8" y1="50.8" x2="1175.4" y2="54.5" stroke="#3a8797" stroke-width="0.9" stroke-dasharray="2 1.2"/><line x1="1163.8" y1="50.8" x2="1163.8" y2="38.9" stroke="#3a8797" stroke-width="0.9" stroke-dasharray="2 1.2"/><polyline points="1155.0,44.5 1168.4,47.6 1175.4,41.0 1163.8,38.9 1155.0,44.5" fill="none" stroke="#2b7f90" stroke-width="1.5" stroke-linejoin="round"/><polyline points="1155.0,44.5 1155.0,56.4 1168.4,61.4 1175.4,54.5 1175.4,41.0" fill="none" stroke="#2b7f90" stroke-width="1.5" stroke-linejoin="round"/><polyline points="1168.4,47.6 1168.4,61.4" fill="none" stroke="#2b7f90" stroke-width="1.5" stroke-linejoin="round"/></svg><svg class="abs" style="left:0;top:70px" width="1200" height="39" viewBox="0 70 1200 39"><defs>
<linearGradient id="yl" x1="0" y1="0" x2="1" y2="1"><stop offset="0" stop-color="#ffe81a"/><stop offset="1" stop-color="#ffa200"/></linearGradient>
<linearGradient id="yl2" x1="0" y1="0" x2="1" y2="0"><stop offset="0" stop-color="#ffe61a"/><stop offset="1" stop-color="#ffa400"/></linearGradient>
<radialGradient id="ys" cx="0.35" cy="0.3" r="0.8"><stop offset="0" stop-color="#fff01f"/><stop offset="1" stop-color="#ffa600"/></radialGradient>
<linearGradient id="bl" x1="0" y1="0" x2="1" y2="1"><stop offset="0" stop-color="#b5c4f2"/><stop offset="1" stop-color="#5a74d6"/></linearGradient>
<linearGradient id="bd" x1="0" y1="0" x2="1" y2="1"><stop offset="0" stop-color="#3f6ad0"/><stop offset="1" stop-color="#0a2488"/></linearGradient>
<linearGradient id="bh" x1="0" y1="0" x2="1" y2="0"><stop offset="0" stop-color="#0b2b9c"/><stop offset="0.45" stop-color="#0a2a98"/><stop offset="0.6" stop-color="#9fb6ee"/><stop offset="0.75" stop-color="#4a68cc"/><stop offset="1" stop-color="#7f98e4"/></linearGradient>
<radialGradient id="bs" cx="0.35" cy="0.3" r="0.8"><stop offset="0" stop-color="#5e9cf0"/><stop offset="0.6" stop-color="#1540b4"/><stop offset="1" stop-color="#071f80"/></radialGradient>
<radialGradient id="ls" cx="0.35" cy="0.3" r="0.8"><stop offset="0" stop-color="#d2dcfa"/><stop offset="1" stop-color="#8f9aea"/></radialGradient>
<radialGradient id="gs" cx="0.4" cy="0.3" r="0.8"><stop offset="0" stop-color="#b4b4b4"/><stop offset="1" stop-color="#7d7d7d"/></radialGradient>
<radialGradient id="rv" cx="0.3" cy="0.5" r="0.8"><stop offset="0" stop-color="#6aa6f4"/><stop offset="1" stop-color="#1a48bc"/></radialGradient>
<linearGradient id="lf" x1="0" y1="0.5" x2="1" y2="0.5"><stop offset="0" stop-color="#5a9aea"/><stop offset="1" stop-color="#12309c"/></linearGradient>
<linearGradient id="sw" x1="0" y1="0" x2="1" y2="1"><stop offset="0" stop-color="#2a52c4"/><stop offset="0.6" stop-color="#1a3cae"/><stop offset="1" stop-color="#7ea0ee"/></linearGradient>
<radialGradient id="op" cx="0.4" cy="0.5" r="0.6"><stop offset="0" stop-color="#5aa0f4"/><stop offset="1" stop-color="#1444b8"/></radialGradient>
<linearGradient id="fb2" x1="0" y1="0" x2="0.2" y2="1"><stop offset="0" stop-color="#0a1c80"/><stop offset="0.35" stop-color="#2458c8"/><stop offset="0.55" stop-color="#0c2894"/><stop offset="1" stop-color="#081870"/></linearGradient>
<linearGradient id="cb2" x1="0" y1="0" x2="1" y2="1"><stop offset="0" stop-color="#3f80e8"/><stop offset="1" stop-color="#163ca8"/></linearGradient>
<linearGradient id="ts2" x1="0" y1="0" x2="1" y2="0"><stop offset="0" stop-color="#6f88e2"/><stop offset="0.45" stop-color="#b0c2f4"/><stop offset="1" stop-color="#6272dc"/></linearGradient>
<radialGradient id="sh"><stop offset="0" stop-color="#222" stop-opacity="0.85"/><stop offset="0.6" stop-color="#333" stop-opacity="0.6"/><stop offset="1" stop-color="#555" stop-opacity="0"/></radialGradient>
</defs><ellipse cx="35" cy="96.3" rx="5.5" ry="2.2" fill="url(#sh)"/><path d="M18.800 84l11.800 1.600v12.600l-11.800-2z" fill="url(#yl)" stroke="#c98a00" stroke-width="0.900" stroke-linejoin="round"/><path d="M30.600 85.600l6-3.400v11.600l-6 4.400z" fill="#ffa800" stroke="#c98a00" stroke-width="0.900" stroke-linejoin="round"/><path d="M18.800 84l7.400-3.300 10.400 1.500-6 3.400z" fill="#ffe21c" stroke="#c98a00" stroke-width="0.900" stroke-linejoin="round"/><ellipse cx="70" cy="96" rx="5.5" ry="2.2" fill="url(#sh)"/><path d="M54.800 82.800v13c0 3.200 16.400 3.200 16.400 0v-13z" fill="url(#yl2)" stroke="#c98a00" stroke-width="0.900"/><ellipse cx="63" cy="82.800" rx="8.200" ry="2.400" fill="#ffe526" stroke="#c98a00" stroke-width="0.900"/><ellipse cx="105" cy="96.3" rx="5.5" ry="2.2" fill="url(#sh)"/><circle cx="98.700" cy="89.500" r="8.600" fill="url(#ys)" stroke="#c98a00" stroke-width="0.900"/><ellipse cx="141" cy="96.5" rx="5.5" ry="2.2" fill="url(#sh)"/><path d="M133.500 80l-8.300 16.200c0 2.700 16.400 2.700 16.400 0z" fill="url(#yl2)" stroke="#c98a00" stroke-width="0.900" stroke-linejoin="round"/><ellipse cx="175.5" cy="95.5" rx="7" ry="2.8" fill="url(#sh)"/><ellipse cx="170" cy="88.300" rx="10" ry="7.800" fill="url(#ys)" stroke="#c98a00" stroke-width="0.900"/><ellipse cx="170.200" cy="87.500" rx="4.800" ry="2.100" fill="#f2f1f0" stroke="#c98a00" stroke-width="0.900"/><path d="M205 83h13" stroke="#333" stroke-width="1.200"/><path d="M203.500 87l7-1.500 3 1v11l-3 1.500-7-1z" fill="url(#yl)" stroke="#c98a00" stroke-width="0.800"/><path d="M200.300 78.500l-3.200 7.300c0 1.500 6.400 1.500 6.400 0z" fill="#ffd51a" stroke="#c98a00" stroke-width="0.800"/><circle cx="200.700" cy="94" r="4.600" fill="none" stroke="#222" stroke-width="1.100"/><circle cx="200.700" cy="94" r="2.400" fill="none" stroke="#222" stroke-width="1"/><circle cx="200.700" cy="94" r="0.700" fill="#222"/><circle cx="212.800" cy="94.800" r="5.200" fill="none" stroke="#4a4aa0" stroke-width="1"/><path d="M212 97.500h4" stroke="#555" stroke-width="1"/><path d="M233.500 81.800l2.600 2.700-2.600 2.700-2.600-2.700z" fill="#111"/><path d="M236.800 82.300l4.600-3.600" stroke="#e01818" stroke-width="1.500"/><path d="M242.500 77.800l-1 3.200-2.400-3z" fill="#e01818"/><path d="M236 83l2.700-.3-.5-2.300z" fill="#e01818"/><path d="M243.800 78.600h9.400" stroke="#111" stroke-width="1.800"/><path d="M250.500 80.500v4" stroke="#e01818" stroke-width="1.500"/><path d="M248 83.500h5l-2.500 3.200z" fill="#e01818"/><rect x="245.300" y="88.300" width="7" height="7" fill="#fff" stroke="#222" stroke-width="1.300"/><path d="M251.800 97l-4.500 1.800" stroke="#e01818" stroke-width="1.500"/><path d="M245.500 99.500l3-2.600 1 2.800z" fill="#e01818"/><ellipse cx="241" cy="98" rx="3" ry="1.2" fill="url(#sh)"/><path d="M231 91.500l7.200 1v7l-7.200-1.300z" fill="url(#yl)" stroke="#c98a00" stroke-width="0.800"/><path d="M238.200 92.500l3.800-2v6.500l-3.800 2.500z" fill="#ffa800" stroke="#c98a00" stroke-width="0.800"/><path d="M231 91.500l4-1.800 7 .800-3.800 2z" fill="#ffe21c" stroke="#c98a00" stroke-width="0.800"/><ellipse cx="298" cy="95.5" rx="4" ry="2" fill="url(#sh)"/><path d="M280.200 91.500l9.300 1.800v6l-9.300-2z" fill="url(#bl)" stroke="#3846b8" stroke-width="0.800"/><path d="M289.500 93.300l9.500-2.300v5.500l-9.500 2.800z" fill="#8c9ce6" stroke="#3846b8" stroke-width="0.800"/><path d="M280.200 91.500l8.500-2.500 10.300 2-9.500 2.300z" fill="#1a3cb0" stroke="#0c2488" stroke-width="0.800"/><path d="M289.200 79.300l6.300 6h-3.300v5.500h-6v-5.500h-3.300z" fill="url(#bd)" stroke="#0c2488" stroke-width="0.800" stroke-linejoin="round"/><path d="M325.9 89.6 L325.7 79.4 A10.2 10.2 0 0 0 318.8 96.9 Z" fill="url(#rv)" stroke="#0a1a66" stroke-width="0.900" stroke-linejoin="round"/><path d="M325.9 89.6 L318.8 96.9 A10.2 10.2 0 0 0 331.9 97.9 Z" fill="#8c9fe6" stroke="#7f90dc" stroke-width="0.500"/><path d="M333.8 95.8 A10 10 0 0 0 332.3 81.9 L329.9 84.9 A6.2 6.2 0 0 1 330.8 93.4 Z" fill="#0a2690"/><path d="M334.4 80.8 L328.7 86.7 L327.0 81.6 Z" fill="#0a2690"/><circle cx="325.9" cy="89.6" r="3.300" fill="#fbfbfb"/><circle cx="325.9" cy="89.6" r="1.100" fill="#111"/><path d="M350.500 85.400l7.500-4.100v13.100l-7.500 3.800z" fill="url(#bl)" stroke="#3846b8" stroke-width="0.800"/><path d="M364.300 81.300l7.400 4.100v12.800l-7.400-3.800z" fill="url(#bd)" stroke="#0a1c70" stroke-width="0.800"/><path d="M361 79v22" stroke="#f01010" stroke-width="2" stroke-dasharray="5.500 2.400"/><path d="M397.5 93.200L400.1 91.200L407.4 93.500L407.4 96.500L397.5 98.800z" fill="#474747"/><path d="M386.1 87.700L396.9 90L396.9 98.800L386.1 95.900z" fill="url(#bl)" stroke="#5050d8" stroke-width="0.700" stroke-linejoin="round"/><path d="M386.1 87.700C386.2 84.500 387 83 388.5 82.300L400 84.800C398.3 85.800 397.2 87.500 396.9 90z" fill="url(#fb2)" stroke="#0a1a70" stroke-width="0.600" stroke-linejoin="round"/><path d="M388.5 82.300L393.2 80.200L406.6 82.700L400 84.700z" fill="url(#ts2)" stroke="#6a78e0" stroke-width="0.400"/><path d="M432.7 93.200L435.3 91.200L442.6 93.500L442.6 96.500L432.7 98.800z" fill="#474747"/><path d="M421.3 87.700L432.1 90L432.1 98.800L421.3 95.900z" fill="url(#bl)" stroke="#5050d8" stroke-width="0.700" stroke-linejoin="round"/><path d="M421.3 87.700L425.5 82.400L436.5 84.600L432.1 90z" fill="url(#cb2)" stroke="#0a1a70" stroke-width="0.700" stroke-linejoin="round"/><path d="M425.5 82.300L428.4 80.200L441.8 82.700L436.5 84.700z" fill="url(#ts2)" stroke="#6a78e0" stroke-width="0.400"/><path d="M460.300 83.800l14.700-3.700v13l-14.700 3.700z" fill="url(#bl)" stroke="#3846b8" stroke-width="0.600"/><path d="M460.350 83v14.300M474.950 79.250v14.250" stroke="#f00c0c" stroke-width="2.100"/><path d="M499.900 79.800l10.200 3.800-10.500 6.700h-4.400z" fill="#0c2292"/><path d="M499.600 90.300l10.500-6.700v10.200l-10.500 3.200z" fill="url(#lf)"/><path d="M499.900 79.800l10.200 3.800v10.200" fill="none" stroke="#f01414" stroke-width="1.300"/><rect x="495.700" y="90.800" width="3.600" height="5.900" fill="#fff" stroke="#f02a1a" stroke-width="1.200"/><path d="M536.900 79.800l8.800 1.800 3.500 7.600c-1 5-6 9.500-12.600 10.500l-5.800-1v-7.200c3.500-2.500 5.600-6.500 6.100-11.700z" fill="url(#sw)"/><path d="M545.700 81.600c-.5 6-4 11.500-9.100 13" fill="none" stroke="#8aa0ea" stroke-width="0.700" opacity="0.800"/><path d="M536.900 79.800l8.800 1.800 3.500 7.600" fill="none" stroke="#f01414" stroke-width="1.400" stroke-linejoin="round"/><path d="M545.900 83.200l3.600-4.500" stroke="#f01414" stroke-width="1.800"/><path d="M527 95.500h6" stroke="#f00c0c" stroke-width="2.200"/><rect x="531.400" y="92.100" width="5" height="7.300" fill="#fff" stroke="#f02a1a" stroke-width="1.200"/><path d="M533 95.500h2.500" stroke="#f00c0c" stroke-width="1.600"/><path d="M563.800 91.600l6.400-3.300 12.500 .500-6.700 3.300z" fill="url(#op)" stroke="#0a1c70" stroke-width="0.800" stroke-linejoin="round"/><path d="M563.500 98.500l7-3.500 12 .300-7 3.800z" fill="url(#op)" stroke="#0a1c70" stroke-width="0.800" stroke-linejoin="round"/><path d="M572.500 79.200l5.900 5.900h-3.400v4.600h-5v-4.600h-3.400z" fill="url(#bd)" stroke="#0a1c70" stroke-width="0.800" stroke-linejoin="round"/><ellipse cx="618.5" cy="95.5" rx="3" ry="1.8" fill="url(#sh)"/><path d="M599 90.500l11 2.200v6.300l-11-1.800z" fill="url(#bl)" stroke="#3846b8" stroke-width="0.800"/><path d="M610 92.700l8-3.500v6l-8 3.800z" fill="#7388dd" stroke="#3846b8" stroke-width="0.800"/><path d="M599 90.500l8.500-3 10.500 1.700-8 3.500z" fill="#2a56cc" stroke="#0c2488" stroke-width="0.800"/><ellipse cx="664" cy="92.5" rx="4" ry="1.5" fill="url(#sh)"/><ellipse cx="660" cy="98" rx="4.5" ry="1.6" fill="url(#sh)"/><circle cx="661.300" cy="85.200" r="6.900" fill="url(#ls)" stroke="#7d84e0" stroke-width="0.800"/><circle cx="654.800" cy="91.800" r="7.400" fill="url(#bs)" stroke="#061a78" stroke-width="0.800"/><ellipse cx="697" cy="98.3" rx="5" ry="1.5" fill="url(#sh)"/><circle cx="690" cy="92" r="7.400" fill="url(#gs)"/><circle cx="696.900" cy="85.100" r="6.800" fill="#fff" stroke="#9a9a9a" stroke-width="1"/><ellipse cx="733" cy="98" rx="5" ry="1.5" fill="url(#sh)"/><circle cx="725.500" cy="92" r="7.400" fill="url(#gs)"/><circle cx="732" cy="85.800" r="7.200" fill="url(#gs)"/><path d="M720 87l7-7 10 4-7 12z" fill="#999" opacity="0.500"/><ellipse cx="767" cy="97.8" rx="5" ry="1.3" fill="url(#sh)"/><circle cx="760.600" cy="92.600" r="7" fill="#fff" stroke="#9a9a9a" stroke-width="1"/><circle cx="767.800" cy="85.100" r="6.600" fill="#fff" fill-opacity="0.600" stroke="#9a9a9a" stroke-width="1"/><path d="M761.200 86a7 7 0 0 1 6.400 5.600a6.600 6.600 0 0 1-6.400-5.600z" fill="#8a8a8a"/><circle cx="760.600" cy="92.600" r="7" fill="none" stroke="#9a9a9a" stroke-width="1"/><ellipse cx="805" cy="97" rx="4.5" ry="2" fill="url(#sh)"/><path d="M797 82l-7.800 15c0 2.500 16 2.500 16 0z" fill="url(#bs)" stroke="#6b6b1e" stroke-width="0.900"/><path d="M800.500 86.500l7.500 5.300" stroke="#334" stroke-width="1.500"/><circle cx="797.300" cy="83.500" r="4.300" fill="#cfd8f0" fill-opacity="0.700" stroke="#9c9c9c" stroke-width="1.300"/><path d="M824.500 79v16.500l14 4.500v-3.500l6.500-.5v-6l-2.500-1v-7.500z" fill="#bdbdbd" stroke="#cfcfcf" stroke-width="0.600"/><path d="M826.500 82.500l10 1.500v11l-10-2z" fill="#a3a3a3"/><path d="M829 85l5.500.8v6l-5.500-1z" fill="#8f8f8f"/><path d="M824.500 79l18 2.500-3 2-13-1z" fill="#d6d6d6"/><ellipse cx="877" cy="98" rx="4" ry="1.8" fill="url(#sh)"/><path d="M864.500 81.500l6.500 1.800v16.500l-6.500-2.300z" fill="#1a3ab0" stroke="#08146a" stroke-width="0.700"/><path d="M871 83.300l5.500-2.500v16l-5.500 3z" fill="#0a1c78" stroke="#08146a" stroke-width="0.700"/><path d="M864.500 81.500l5.500-2.500 6.500 1.800-5.500 2.500z" fill="#3a6ad8" stroke="#08146a" stroke-width="0.700"/><path d="M858.500 86.500l18-4 5.500 1.500-17 5z" fill="#ff2020" fill-opacity="0.550" stroke="#ff1a1a" stroke-width="0.900"/><path d="M858.500 93.500l18-4 5.500 1.500-17 5z" fill="#ff2020" fill-opacity="0.550" stroke="#ff1a1a" stroke-width="0.900"/></svg>
<svg class="abs" style="left:0;top:188px" width="120" height="80" viewBox="0 188 120 80"><path d="M30 191.500h6.500l3.500 3.500v11.500h-10z" fill="#fff" stroke="#111" stroke-width="1.200" stroke-linejoin="round"/><path d="M36.500 191.500v3.500h3.500" fill="none" stroke="#111" stroke-width="0.900"/><path d="M31.500 193.500h3.500M31.500 195.500h3.500M31.500 197.500h7M31.500 199.500h3" stroke="#111" stroke-width="1"/><circle cx="35" cy="202.300" r="2.600" fill="#19c7d4"/><rect x="35.500" y="200.800" width="3.500" height="2.800" rx="1" fill="#c820c8"/><path d="M31 204.500h4" stroke="#111" stroke-width="1.200"/><rect x="54.500" y="209.8" width="7" height="7.300" fill="#d9d9d9" stroke="#8e8e8e" stroke-width="0.700"/><path d="M56.700 210.5v4M59.300 210.5v4M56.700 212.8h2.600" stroke="#9a9a9a" stroke-width="1" fill="none"/><path d="M46.500 216.3l4.500 2.200v7l-4.500-2.500z" fill="#c8c8c8" stroke="#8e8e8e" stroke-width="0.800"/><path d="M51 218.5l4.500-1.500v6.500l-4.500 2z" fill="#b9b9b9" stroke="#8e8e8e" stroke-width="0.800"/><path d="M46.500 216.3l4-1.800 5 .5-4.500 1.500z" fill="#c8c8c8" stroke="#8e8e8e" stroke-width="0.800"/><path d="M50.300 210.7h3.800v4.200h1.500l-3.400 4.200-3.400-4.200h1.500z" fill="#e2e2e2" stroke="#8e8e8e" stroke-width="0.500"/><rect x="54.500" y="247.3" width="7" height="7.300" fill="#8a50a8" stroke="#3d5a20" stroke-width="0.700"/><path d="M56.700 248v4M59.300 248v4M56.700 250.3h2.600" stroke="#fff" stroke-width="1" fill="none"/><path d="M46.500 253.8l4.500 2.200v7l-4.500-2.500z" fill="#78b04a" stroke="#3d5a20" stroke-width="0.800"/><path d="M51 256l4.500-1.500v6.500l-4.500 2z" fill="#5e9a38" stroke="#3d5a20" stroke-width="0.800"/><path d="M46.500 253.8l4-1.800 5 .5-4.500 1.500z" fill="#78b04a" stroke="#3d5a20" stroke-width="0.800"/><path d="M50.300 248.2h3.800v4.200h1.500l-3.400 4.200-3.400-4.200h1.500z" fill="#f0a050" stroke="#3d5a20" stroke-width="0.500"/><path d="M48.300 233.300l7 1.400v7.300l-7-1.700z" fill="#0a22f2" stroke="#0a0a30" stroke-width="1" stroke-linejoin="round"/><path d="M55.300 234.700l4.200-2.200v7l-4.200 2.500z" fill="#0618b8" stroke="#0a0a30" stroke-width="1" stroke-linejoin="round"/><path d="M48.300 233.300l4.200-2.300 7 1.500-4.200 2.200z" fill="#0a22f2" stroke="#0a0a30" stroke-width="1" stroke-linejoin="round"/><rect x="65.500" y="246.500" width="273" height="17.500" fill="none" stroke="#f7b89a" stroke-width="0.800" stroke-dasharray="1 1"/></svg><svg class="abs" style="left:476px;top:624px" width="20" height="20" viewBox="0 0 20 20"><path d="M3 2.500h6l0 0v5l-2 0v8h-4z" fill="#e84a20"/><path d="M3.500 3h5v4h-5z" fill="#e84a20"/><circle cx="11.500" cy="11.500" r="4.300" fill="#1f4aa8"/><circle cx="11.500" cy="11.500" r="1.700" fill="#f2f1f0"/><path d="M11.500 6v11M6 11.500h11M7.600 7.600l7.800 7.800M15.400 7.600l-7.800 7.800" stroke="#1f4aa8" stroke-width="1.500"/><circle cx="11.500" cy="11.500" r="1.700" fill="#f2f1f0"/></svg>
<div class="t" style="left:75.0px;top:10.3px;font-size:14.5px;font-weight:bold;color:#dfdbd2;letter-spacing:-0.01px;font-family:'Liberation Sans','DejaVu Sans',sans-serif">FreeCAD</div>
<div class="t" style="left:475.0px;top:43.3px;font-size:13px;font-weight:normal;color:#3c3c3c;letter-spacing:0.08px">Part</div>
<div class="t" style="left:3.8px;top:115.7px;font-size:13px;font-weight:normal;color:#3c3c3c;letter-spacing:0.06px">Combo View</div>
<div class="t" style="left:9.5px;top:142.4px;font-size:13px;font-weight:normal;color:#3c3c3c;letter-spacing:0.22px">Project</div>
<div class="t" style="left:72.0px;top:142.8px;font-size:13px;font-weight:normal;color:#3c3c3c;letter-spacing:-0.17px">Tasks</div>
<div class="t" style="left:8.3px;top:172.0px;font-size:13px;font-weight:normal;color:#3c3c3c;letter-spacing:0.03px">Labels &amp; Attributes</div>
<div class="t" style="left:48.4px;top:192.1px;font-size:14px;font-weight:bold;color:#2b2b2b;letter-spacing:0.03px;font-family:'Liberation Sans','DejaVu Sans',sans-serif">Unnamed</div>
<div class="t" style="left:68.0px;top:211.5px;font-size:13px;font-weight:normal;color:#c3c1bd;letter-spacing:0.12px">master_box</div>
<div class="t" style="left:68.0px;top:230.5px;font-size:13px;font-weight:normal;color:#2b2b2b;letter-spacing:-0.00px">Array</div>
<div class="t" style="left:68.0px;top:248.7px;font-size:14px;font-weight:bold;color:#ffffff;letter-spacing:0.06px;font-family:'Liberation Sans','DejaVu Sans',sans-serif">base_1D</div>
<div class="t" style="left:10.3px;top:288.6px;font-size:13px;font-weight:normal;color:#3c3c3c;letter-spacing:0.25px">Property</div>
<div class="t" style="left:108.6px;top:288.6px;font-size:13px;font-weight:normal;color:#3c3c3c;letter-spacing:0.16px">Value</div>
<div class="t" style="left:29.0px;top:310.4px;font-size:14px;font-weight:bold;color:#ffffff;letter-spacing:-0.37px;font-family:'Liberation Sans','DejaVu Sans',sans-serif">Base</div>
<div class="t" style="left:29.0px;top:330.8px;font-size:13px;font-weight:normal;color:#2b2b2b;letter-spacing:-0.02px">Label</div>
<div class="t" style="left:107.5px;top:330.8px;font-size:13px;font-weight:normal;color:#2b2b2b;letter-spacing:-0.11px">base_1D</div>
<div class="t" style="left:29.0px;top:350.4px;font-size:13px;font-weight:normal;color:#2b2b2b;letter-spacing:0.05px">Placement</div>
<div class="t" style="left:107.5px;top:350.4px;font-size:13px;font-weight:normal;color:#2b2b2b;letter-spacing:-0.39px">[(0,00 0,00 1,00);0,00 °;(-2,00 -2,00 …</div>
<div class="t" style="left:29.0px;top:369.6px;font-size:14px;font-weight:bold;color:#ffffff;letter-spacing:-0.48px;font-family:'Liberation Sans','DejaVu Sans',sans-serif">Box</div>
<div class="t" style="left:29.0px;top:389.8px;font-size:13px;font-weight:normal;color:#2b2b2b;letter-spacing:0.17px">Height</div>
<div class="t" style="left:107.5px;top:389.8px;font-size:13px;font-weight:normal;color:#2b2b2b;letter-spacing:-0.49px">3,00 mm</div>
<div class="t" style="left:29.0px;top:409.5px;font-size:13px;font-weight:normal;color:#2b2b2b;letter-spacing:0.03px">Length</div>
<div class="t" style="left:107.5px;top:409.5px;font-size:13px;font-weight:normal;color:#2b2b2b;letter-spacing:-0.44px">122,00 mm</div>
<div class="t" style="left:29.0px;top:429.2px;font-size:13px;font-weight:normal;color:#2b2b2b;letter-spacing:0.04px">Width</div>
<div class="t" style="left:107.5px;top:429.2px;font-size:13px;font-weight:normal;color:#2b2b2b;letter-spacing:-0.46px">16,00 mm</div>
<div class="t" style="left:11.5px;top:627.5px;font-size:13px;font-weight:normal;color:#3c3c3c;letter-spacing:0.16px">View</div>
<div class="t" style="left:60.0px;top:629.0px;font-size:13px;font-weight:normal;color:#3c3c3c;letter-spacing:-0.26px">Data</div>
<div class="t" style="left:372.0px;top:628.3px;font-size:13px;font-weight:normal;color:#3c3c3c;letter-spacing:-0.14px">Start page</div>
<div class="t" style="left:502.0px;top:629.0px;font-size:13px;font-weight:normal;color:#3c3c3c;letter-spacing:-0.19px">Unnamed : 1*</div>
<div class="t" style="left:7.5px;top:659.6px;font-size:13px;font-weight:normal;color:#3c3c3c;letter-spacing:0.03px">Valid</div>
<div class="t" style="left:1050.0px;top:659.6px;font-size:13px;font-weight:normal;color:#3c3c3c;letter-spacing:-0.42px">130.11 x 79.66 mm</div>
</body></html>
